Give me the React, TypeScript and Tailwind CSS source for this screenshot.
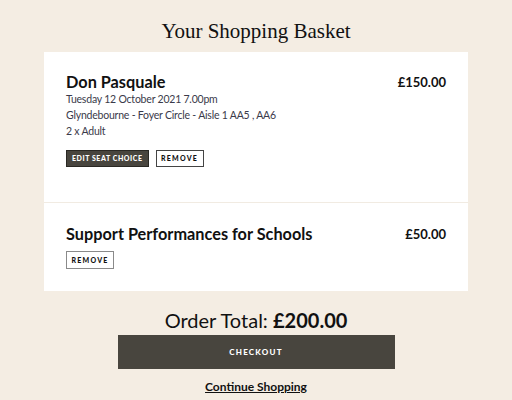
import React from "react";

type BasketItem = {
  title: string;
  price: string;
  details?: string[];
  canEdit?: boolean;
};

const items: BasketItem[] = [
  {
    title: "Don Pasquale",
    price: "£150.00",
    details: [
      "Tuesday 12 October 2021 7.00pm",
      "Glyndebourne - Foyer Circle - Aisle 1 AA5 , AA6",
      "2 x Adult",
    ],
    canEdit: true,
  },
  {
    title: "Support Performances for Schools",
    price: "£50.00",
  },
];

const App: React.FC = () => {
  return (
    <div className="min-h-screen w-full bg-[#f4ede3] font-['Lato',sans-serif] text-[#111] flex flex-col items-center">
      <h1 className="mt-[18px] text-[21px] leading-[26px] font-['Liberation_Serif',serif] text-[#111]">
        Your Shopping Basket
      </h1>

      <div className="mt-[8px] w-[424px] bg-white flex flex-col">
        {items.map((item, i) => (
          <div
            key={item.title}
            className={`px-[22px] flex justify-between ${
              i === 0
                ? "pt-[20px] pb-[35px] border-b border-[#f1ebe2]"
                : "pt-[21px] pb-[22px]"
            }`}
          >
            <div className="flex flex-col">
              <h2 className="text-[16.3px] leading-[20px] font-bold">{item.title}</h2>
              {item.details && (
                <div className="mt-[-1px] text-[10.5px] leading-[16px] tracking-[-0.02em] text-[#3a3a4a]">
                  {item.details.map((d) => (
                    <p key={d}>{d}</p>
                  ))}
                </div>
              )}
              <div className={`flex gap-[7px] ${item.details ? "mt-[11px]" : "mt-[7px]"}`}>
                {item.canEdit && (
                  <button className="h-[17px] px-[5px] bg-[#48453e] border border-[#2a2823] text-white text-[7px] font-black tracking-[0.08em] uppercase">
                    Edit Seat Choice
                  </button>
                )}
                <button
                  className={`${item.details ? "h-[17px] border-[#444]" : "h-[18px] border-[#8a8a8a]"} w-[48px] bg-white border text-[#111] text-[7px] font-black tracking-[0.18em] uppercase`}
                >
                  Remove
                </button>
              </div>
            </div>
            <div className="text-[13px] leading-[20px] font-bold">{item.price}</div>
          </div>
        ))}
      </div>

      <div className="mt-[17px] text-[20px] leading-[24px] text-[#111]">
        Order Total: <span className="font-bold">£200.00</span>
      </div>

      <button className="mt-[3px] w-[277px] h-[34px] bg-[#48453e] text-white text-[8px] font-black tracking-[0.15em] uppercase">
        Checkout
      </button>

      <a href="#" className="mt-[10px] text-[12px] leading-[16px] font-bold underline text-[#111]">
        Continue Shopping
      </a>
    </div>
  );
};

export default App;
